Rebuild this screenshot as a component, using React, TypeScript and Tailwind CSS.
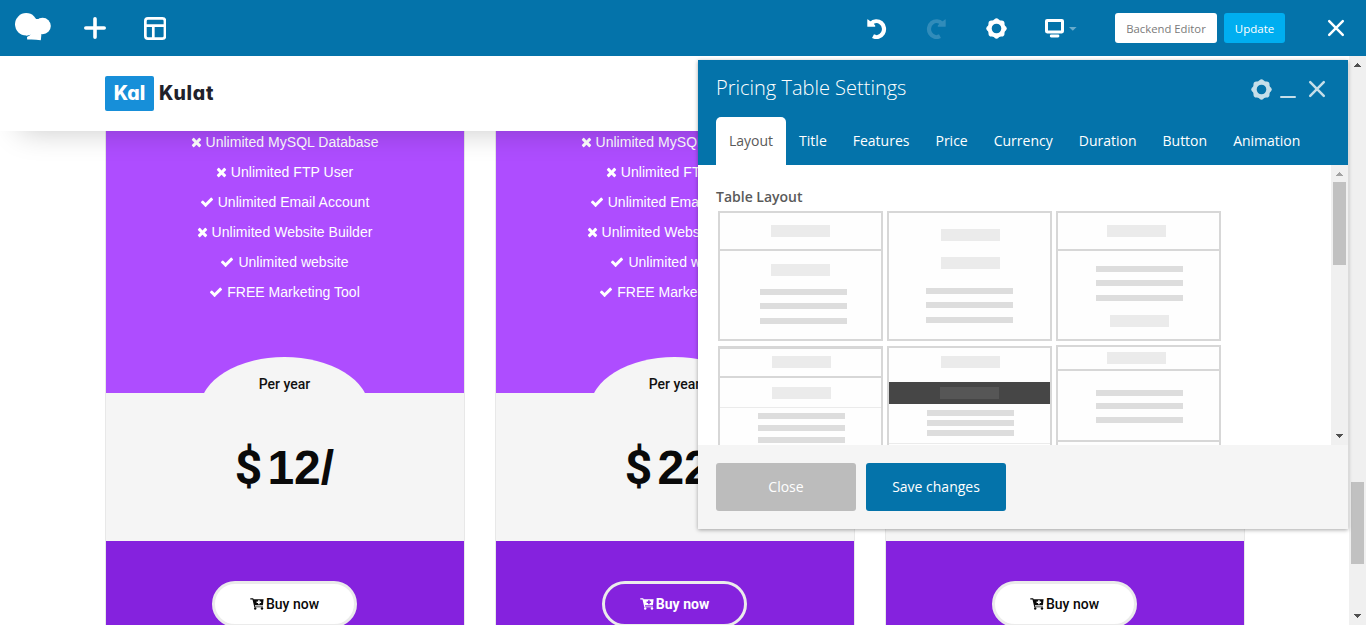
import React from "react";

type Rect = [x: number, y: number, w: number, h: number, fill: string];

const LINE = "#d7d7d7";
const BLOCK = "#ebebeb";
const BAR = "#dddddd";

const block = (x: number, y: number, fill = BLOCK): Rect => [x, y, 59, 12, fill];
const bars = (x: number, ys: number[]): Rect[] => ys.map((y): Rect => [x, y, 87, 6, BAR]);

const layoutColumns: { gap: string; items: Rect[][] }[] = [
  {
    gap: "gap-[5px]",
    items: [
      [[2, 38, 161, 2, LINE], block(53, 14), block(53, 53), ...bars(42, [78, 92, 107])],
      [[2, 2, 161, 1, LINE], [2, 30, 161, 2, LINE], block(54, 10), block(54, 41), [2, 61, 161, 1, BLOCK], ...bars(40, [67, 79, 91])],
    ],
  },
  {
    gap: "gap-[5px]",
    items: [
      [block(54, 18), block(54, 46), ...bars(39, [77, 91, 106])],
      [block(54, 10), [2, 36, 161, 22, "#464646"], block(53, 41, "#565656"), ...bars(40, [64, 74, 84]), [2, 97, 161, 1, BLOCK]],
    ],
  },
  {
    gap: "gap-[4px]",
    items: [
      [[2, 38, 161, 2, LINE], block(51, 14), ...bars(40, [55, 69, 84]), block(54, 104)],
      [[2, 24, 161, 2, LINE], block(51, 7), ...bars(40, [45, 58, 72]), [2, 95, 161, 2, LINE]],
    ],
  },
];

function LayoutThumb({ rects }: { rects: Rect[] }) {
  return (
    <svg width="165" height="130" className="block" shapeRendering="crispEdges">
      <rect x="1" y="1" width="163" height="128" fill="#fefefe" stroke={LINE} strokeWidth="2" />
      {rects.map(([x, y, w, h, fill], i) => (
        <rect key={i} x={x} y={y} width={w} height={h} fill={fill} />
      ))}
    </svg>
  );
}

function Check() {
  return (
    <svg viewBox="0 0 1792 1792" className="h-[14px] w-[14px]" fill="currentColor">
      <path d="M1671 566q0 40-28 68l-724 724-136 136q-28 28-68 28t-68-28l-136-136-362-362q-28-28-28-68t28-68l136-136q28-28 68-28t68 28l294 295 656-657q28-28 68-28t68 28l136 136q28 28 28 68z" />
    </svg>
  );
}

function Times() {
  return (
    <svg viewBox="192 0 1408 1792" className="h-[14px] w-[11px]" fill="currentColor">
      <path d="M1490 1322q0 40-28 68l-136 136q-28 28-68 28t-68-28l-294-294-294 294q-28 28-68 28t-68-28l-136-136q-28-28-28-68t28-68l294-294-294-294q-28-28-28-68t28-68l136-136q28-28 68-28t68 28l294 294 294-294q28-28 68-28t68 28l136 136q28 28 28 68t-28 68l-294 294 294 294q28 28 28 68z" />
    </svg>
  );
}

function Cart() {
  return (
    <svg width="14" height="12" viewBox="0 0 14 12" fill="currentColor">
      <path d="M0.3 0.3H3.2L3.6 1.2H13.6L12.9 7.2H5L5.1 8.4H13V9.3H4.3L2.5 1.5H0.3Z M8.1 2.2V3.5H6.6V5H8.1V6.3H9.7V5H11.1V3.5H9.7V2.2Z" fillRule="evenodd" />
      <circle cx="5.2" cy="10.5" r="1.2" />
      <circle cx="12" cy="10.5" r="1.2" />
    </svg>
  );
}

function Gear({ className }: { className?: string }) {
  const bumps = [0, 45, 90, 135, 180, 225, 270, 315];
  return (
    <svg width="21" height="21" viewBox="-10.5 -10.5 21 21" className={className}>
      <circle r="6.8" fill="none" stroke="currentColor" strokeWidth="4" />
      {bumps.map((a) => (
        <path key={a} d="M-3.6-7.6 L-2-9.3 Q0-11.2 2-9.3 L3.6-7.6Z" fill="currentColor" transform={`rotate(${a})`} />
      ))}
    </svg>
  );
}

function Undo({ className }: { className?: string }) {
  return (
    <svg width="20" height="21" viewBox="0 0 20 21" className={className}>
      <path d="M4 5.6A7.6 7.9 0 1 1 6 18.2" fill="none" stroke="currentColor" strokeWidth="4.2" />
      <path d="M0.3 1.4Q0.5 1 1 1.4L3 3 6.5 5.6 8.2 7.4V8.8H0.9Q0.3 8.8 0.3 8.2Z" fill="currentColor" />
    </svg>
  );
}

function CloseIcon({ className }: { className?: string }) {
  return (
    <svg width="18" height="18" viewBox="0 0 18 18" className={className}>
      <path d="M2.2 2.2 15.8 15.8M15.8 2.2 2.2 15.8" stroke="currentColor" strokeWidth="2.5" strokeLinecap="round" />
    </svg>
  );
}

function TopBar() {
  return (
    <div className="flex h-14 shrink-0 items-center bg-[#0473aa] text-white">
      <svg width="38" height="30" viewBox="0 0 38 30" className="ml-[14px]" fill="currentColor">
        <circle cx="12.2" cy="11.3" r="11.2" />
        <circle cx="28.6" cy="13" r="8.2" />
        <path d="M12 6H28V19L27.5 20.5 26.8 27.2Q19.5 26 13.2 26.6L13 24 Q16 22.8 17.4 20.6 Q15 22.4 12 22.5Z" />
      </svg>
      <svg width="22" height="22" viewBox="0 0 22 22" className="ml-[32px]">
        <path d="M11 1.8V20.2M1.8 11H20.2" stroke="currentColor" strokeWidth="3.6" strokeLinecap="round" />
      </svg>
      <svg width="22" height="23" viewBox="0 0 22 23" className="ml-[38px]" fill="none" stroke="currentColor" strokeWidth="2.7">
        <rect x="1.35" y="1.4" width="19.6" height="20.2" rx="2.6" />
        <path d="M2 8.7H20.4M9.3 9V21" />
      </svg>
      <div className="ml-auto flex items-center">
        <Undo />
        <Undo className="ml-[39px] -scale-x-100 text-[#318cba]" />
        <Gear className="ml-10" />
        <svg width="32" height="20" viewBox="0 0 32 20" className="ml-[38px]">
          <rect x="1.5" y="2.4" width="16" height="11.5" rx="0.6" fill="none" stroke="currentColor" strokeWidth="3" />
          <path d="M6.2 18H13" stroke="currentColor" strokeWidth="2.8" strokeLinecap="round" />
          <path d="M24 9H31.6L27.8 12.8Z" fill="#68abcc" />
        </svg>
        <button className="ml-[38px] h-[30px] w-[102px] rounded-[3px] bg-white pt-[2px] text-[11.3px] text-[#7a7a7a]">Backend Editor</button>
        <button className="ml-[7px] h-[30px] w-[61px] rounded-[3px] bg-[#00aef0] pt-px text-[11.5px]">Update</button>
        <CloseIcon className="mr-[21px] ml-[42px]" />
      </div>
    </div>
  );
}

function SiteHeader() {
  return (
    <div className="relative z-10 flex h-[75px] shrink-0 items-center bg-white pl-[105px] font-['Inter'] text-[19.5px] font-extrabold shadow-[0_20px_30px_-20px_rgba(0,0,0,0.22)] [font-feature-settings:'cv11','ss01']">
      <span className="flex h-[35px] w-[49px] items-center justify-center rounded-[2px] bg-[#178fd9] text-white">Kal</span>
      <span className="ml-[5px] tracking-[0.7px] text-[#20212b]">Kulat</span>
    </div>
  );
}

const features: [string, boolean][] = [
  ["Unlimited MySQL Database", false],
  ["Unlimited FTP User", false],
  ["Unlimited Email Account", true],
  ["Unlimited Website Builder", false],
  ["Unlimited website", true],
  ["FREE Marketing Tool", true],
];

function PricingCard({ amount, outlined }: { amount?: string; outlined?: boolean }) {
  return (
    <div className="flex w-[360px] flex-col border-x border-[#e8e8e8]">
      <div className="relative h-[262px] shrink-0 overflow-hidden bg-[#ae4dff]">
        {amount && (
          <>
            <ul className="-mt-1 pr-px text-center font-['Liberation_Sans',Arial,sans-serif] text-sm text-white">
              {features.map(([label, ok]) => (
                <li key={label} className="flex h-[30px] items-center justify-center gap-[4px] tracking-[0.03px]">
                  {ok ? <Check /> : <Times />}
                  {label}
                </li>
              ))}
            </ul>
            <div className="absolute top-[226px] left-[94px] flex h-[104px] w-[169px] justify-center rounded-[50%] bg-[#f5f5f5] pt-[17px] font-['Roboto',sans-serif] text-sm font-medium text-[#111]">
              Per year
            </div>
          </>
        )}
      </div>
      <div className="flex h-[148px] shrink-0 items-center justify-center bg-[#f5f5f5] pt-0.5 text-5xl font-bold text-[#0a0a0a]">
        {amount && (
          <>
            <span className="font-['Roboto',sans-serif]">$</span>
            <span className="mr-px ml-[5px] font-['Liberation_Sans',Arial,sans-serif]">{amount}/</span>
          </>
        )}
      </div>
      <div className="flex flex-1 items-start justify-center bg-[#8522de] pt-10">
        <button
          className={
            "mr-px flex h-[46px] w-[145px] shrink-0 items-center justify-center gap-[2px] rounded-full border-[3px] border-[#ebebeb] font-['Roboto',sans-serif] text-sm " +
            (outlined ? "font-bold text-white" : "bg-white font-medium text-[#0a0a0a]")
          }
        >
          <Cart />
          Buy now
        </button>
      </div>
    </div>
  );
}

function Arrow({ down, color }: { down?: boolean; color: string }) {
  return (
    <svg width="17" height="17" viewBox="0 0 17 17" className="shrink-0" shapeRendering="crispEdges">
      <path d={down ? "M5 6H12L8.5 10Z" : "M5 11H12L8.5 7Z"} fill={color} />
    </svg>
  );
}

const tabs = ["Layout", "Title", "Features", "Price", "Currency", "Duration", "Button", "Animation"];

function SettingsPanel() {
  return (
    <div className="absolute top-[60px] left-[698px] z-20 flex h-[469px] w-[650px] flex-col bg-white text-sm shadow-[0_1px_4px_rgba(0,0,0,0.35)]">
      <div className="flex h-[105px] shrink-0 flex-col bg-[#0473aa] text-white">
        <div className="flex h-[57px] items-center pl-[18px]">
          <h2 className="pb-0.5 text-xl font-light">Pricing Table Settings</h2>
          <div className="ml-auto flex items-center pt-px text-[#c5dee9]">
            <Gear />
            <span className="mt-[16px] ml-2 h-[2px] w-4 rounded-sm bg-current" />
            <CloseIcon className="mr-[22px] ml-3" />
          </div>
        </div>
        <div className="flex h-12 pl-[18px]">
          {tabs.map((t, i) => (
            <div
              key={t}
              className={"flex h-12 items-center px-[13px] " + (i === 0 ? "rounded-t-[5px] bg-white text-[#5a5a5a]" : "")}
            >
              {t}
            </div>
          ))}
        </div>
      </div>
      <div className="flex h-[280px] shrink-0 overflow-hidden">
        <div className="flex-1 pt-[22px] pl-[18px]">
          <div className="h-[24px] text-sm font-semibold text-[#5a5a5a]">Table Layout</div>
          <div className="flex gap-1 pl-0.5">
            {layoutColumns.map((col, i) => (
              <div key={i} className={"flex flex-col " + col.gap}>
                {col.items.map((rects, j) => (
                  <LayoutThumb key={j} rects={rects} />
                ))}
              </div>
            ))}
          </div>
        </div>
        <div className="flex w-[17px] flex-col bg-[#f0f0f0]">
          <Arrow color="#a3a3a3" />
          <div className="mx-0.5 h-[83px] bg-[#c1c1c1]" />
          <div className="flex-1" />
          <Arrow down color="#505050" />
        </div>
      </div>
      <div className="flex h-[84px] items-center gap-[10px] bg-[#f5f5f5] pl-[18px] text-white">
        <button className="h-12 w-[140px] rounded-[3px] bg-[#bcbcbc]">Close</button>
        <button className="h-12 w-[140px] rounded-[3px] bg-[#0473aa]">Save changes</button>
      </div>
    </div>
  );
}

export default function App() {
  return (
    <div className="relative flex h-[625px] w-[1366px] flex-col overflow-hidden bg-white font-['Open_Sans',sans-serif]">
      <TopBar />
      <div className="flex min-h-0 flex-1">
        <div className="flex flex-1 flex-col overflow-hidden">
          <SiteHeader />
          <div className="flex min-h-0 flex-1 gap-[30px] pl-[105px]">
            <PricingCard amount="12" />
            <PricingCard amount="22" outlined />
            <PricingCard />
          </div>
        </div>
        <div className="flex w-[17px] flex-col bg-[#f0f0f0]">
          <Arrow color="#505050" />
          <div className="h-[409px] shrink-0" />
          <div className="mx-0.5 h-[82px] shrink-0 bg-[#c1c1c1]" />
          <div className="flex-1" />
          <Arrow down color="#505050" />
        </div>
      </div>
      <SettingsPanel />
    </div>
  );
}
